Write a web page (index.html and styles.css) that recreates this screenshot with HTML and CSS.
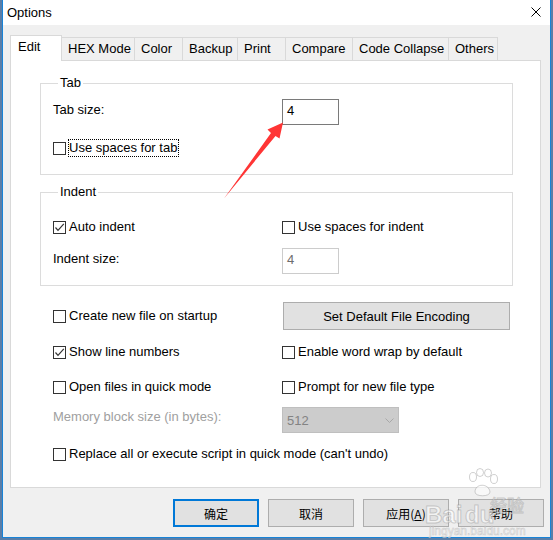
FILE: index.html
```html
<!DOCTYPE html>
<html>
<head>
<meta charset="utf-8">
<link rel="stylesheet" href="styles.css">
</head>
<body>
<div class="window">
  <div class="titlebar">
    <span class="title">Options</span>
    <svg class="close" width="10" height="10" viewBox="0 0 10 10"><path d="M0.5 0.5 L9.5 9.5 M9.5 0.5 L0.5 9.5" stroke="#000" stroke-width="1" fill="none"/></svg>
  </div>
  <div class="client">
    <div class="tabs">
      <div class="tab sel w-edit">Edit</div>
      <div class="tab w-hex">HEX Mode</div>
      <div class="tab w-color">Color</div>
      <div class="tab w-backup">Backup</div>
      <div class="tab w-print">Print</div>
      <div class="tab w-compare">Compare</div>
      <div class="tab w-code">Code Collapse</div>
      <div class="tab w-others">Others</div>
    </div>
    <div class="panel">
      <fieldset class="group g-tab">
        <legend>Tab</legend>
        <div class="row r-tabsize">
          <span class="lbl col1">Tab size:</span>
          <div class="edit">4</div>
        </div>
        <div class="row r-usetab">
          <div class="chk"><span class="box"></span><span class="txt focus">Use spaces for tab</span></div>
        </div>
      </fieldset>
      <fieldset class="group g-indent">
        <legend>Indent</legend>
        <div class="row r-auto">
          <div class="chk col1"><span class="box"><svg width="11" height="11" viewBox="0 0 11 11"><path d="M1.5 5.5 L4 8.3 L9.8 1.8" stroke="#333" stroke-width="1.2" fill="none"/></svg></span><span class="txt">Auto indent</span></div>
          <div class="chk"><span class="box"></span><span class="txt">Use spaces for indent</span></div>
        </div>
        <div class="row r-isize">
          <span class="lbl col1">Indent size:</span>
          <div class="edit disabled">4</div>
        </div>
      </fieldset>
      <div class="options">
        <div class="row r-a">
          <div class="chk col1"><span class="box"></span><span class="txt">Create new file on startup</span></div>
          <div class="btn enc">Set Default File Encoding</div>
        </div>
        <div class="row r-b">
          <div class="chk col1"><span class="box"><svg width="11" height="11" viewBox="0 0 11 11"><path d="M1.5 5.5 L4 8.3 L9.8 1.8" stroke="#333" stroke-width="1.2" fill="none"/></svg></span><span class="txt">Show line numbers</span></div>
          <div class="chk"><span class="box"></span><span class="txt">Enable word wrap by default</span></div>
        </div>
        <div class="row r-c">
          <div class="chk col1"><span class="box"></span><span class="txt">Open files in quick mode</span></div>
          <div class="chk"><span class="box"></span><span class="txt">Prompt for new file type</span></div>
        </div>
        <div class="row r-d">
          <span class="lbl col1 gray">Memory block size (in bytes):</span>
          <div class="select">
            <span>512</span>
            <svg width="9" height="5" viewBox="0 0 9 5"><path d="M0.5 0.5 L4.5 4.5 L8.5 0.5" stroke="#a8a8a8" stroke-width="1" fill="none"/></svg>
          </div>
        </div>
        <div class="row r-e">
          <div class="chk"><span class="box"></span><span class="txt">Replace all or execute script in quick mode (can't undo)</span></div>
        </div>
      </div>
    </div>
    <div class="buttons">
      <div class="btn dlg default">确定</div>
      <div class="btn dlg">取消</div>
      <div class="btn dlg">应用(<u>A</u>)</div>
      <div class="btn dlg">帮助</div>
    </div>
  </div>
  <svg class="arrow" width="553" height="540" viewBox="0 0 553 540">
    <polygon points="283,122.5 267.5,129.5 271,133 224,198.5 275.5,136 279.5,138.5" fill="#ff3535"/>
  </svg>
  <div class="watermark">
    <svg class="paw" width="34" height="30" viewBox="0 0 34 30">
      <g fill="rgba(255,255,255,0.55)" stroke="rgba(150,150,150,0.45)" stroke-width="1">
        <ellipse cx="8" cy="9" rx="3.5" ry="4.5"/>
        <ellipse cx="15" cy="4.5" rx="3.5" ry="4"/>
        <ellipse cx="23" cy="5" rx="3.5" ry="4"/>
        <ellipse cx="29" cy="11" rx="3.5" ry="4.5"/>
        <path d="M10 24 C10 15 24 15 25 24 C25 29 10 29 10 24 Z"/>
      </g>
    </svg>
    <span class="wm-bai">Bai</span><span class="wm-du">du</span><span class="wm-jy">经验</span>
    <span class="wm-url">jingyan.baidu.com</span>
  </div>
</div>
</body>
</html>
```

FILE: styles.css
```css
html, body {
  margin: 0;
  padding: 0;
}
body {
  width: 553px;
  height: 540px;
  background: #5a7ea8;
  overflow: hidden;
  font-family: "Liberation Sans", Arial, "Noto Sans CJK SC", sans-serif;
  font-size: 13px;
  color: #000;
}
.window {
  position: relative;
  margin-left: 2px;
  width: 549px;
  height: 538px;
  box-sizing: border-box;
  border: 1px solid #1883d7;
  border-top: none;
  background: #f0f0f0;
}
.titlebar {
  height: 25px;
  background: #fff;
  display: flex;
  align-items: center;
  justify-content: space-between;
  padding: 0 9px 0 4px;
}
.title {
  line-height: 25px;
}
.close {
  display: block;
  margin-top: -2px;
}
.client {
  padding: 10px 0 0 7px;
}
.tabs {
  display: flex;
  align-items: flex-end;
  height: 25px;
}
.tab {
  box-sizing: border-box;
  height: 23px;
  border: 1px solid #d9d9d9;
  border-bottom: none;
  margin-right: -1px;
  padding: 3px 0 0 6px;
  line-height: 16px;
  white-space: nowrap;
  background: #f0f0f0;
}
.tab.sel {
  height: 26px;
  margin-bottom: -1px;
  background: #fff;
  position: relative;
  z-index: 1;
  padding-left: 7px;
}
.w-edit { width: 52px; }
.w-hex { width: 74px; }
.w-color { width: 49px; }
.w-backup { width: 56px; }
.w-print { width: 49px; }
.w-compare { width: 68px; }
.w-code { width: 97px; }
.w-others { width: 50px; }

.panel {
  box-sizing: border-box;
  width: 531px;
  height: 428px;
  border: 1px solid #d9d9d9;
  background: #fff;
  padding-top: 14px;
}
.group {
  box-sizing: border-box;
  width: 473px;
  margin: 0 0 0 29px;
  padding: 0 0 0 12px;
  border: 1px solid #dcdcdc;
  min-width: 0;
}
.group legend {
  margin-left: 5px;
  padding: 0 2px;
  line-height: 16px;
}
.g-indent {
  margin-top: 9px;
}
.row {
  display: flex;
  align-items: flex-start;
}
.col1 {
  width: 229px;
  flex: none;
}
.lbl {
  line-height: 16px;
  padding-top: 3px;
}
.gray {
  color: #a0a0a0;
  padding-top: 2px;
}
.edit {
  box-sizing: border-box;
  width: 57px;
  height: 26px;
  border: 1px solid #7a7a7a;
  padding: 3px 0 0 4px;
  line-height: 16px;
}
.edit.disabled {
  border-color: #cccccc;
  color: #6d6d6d;
}
.chk {
  display: flex;
  align-items: center;
  height: 16px;
  line-height: 16px;
}
.box {
  box-sizing: border-box;
  width: 13px;
  height: 13px;
  border: 1px solid #333;
  background: #fff;
  flex: none;
  display: flex;
  align-items: center;
  justify-content: center;
}
.box svg {
  display: block;
}
.txt {
  margin-left: 3px;
  white-space: nowrap;
}
.focus {
  outline: 1px dotted #000;
  padding-right: 1px;
}
.r-tabsize { margin-top: 8px; }
.r-usetab { margin-top: 15px; margin-bottom: 18px; }
.r-auto { margin-top: 19px; }
.r-isize { margin-top: 13px; margin-bottom: 11px; }

.options {
  padding-left: 42px;
}
.r-a { margin-top: 16px; align-items: center; height: 28px; }
.r-b { margin-top: 14px; }
.r-c { margin-top: 19px; }
.r-d { margin-top: 12px; }
.r-e { margin-top: 13px; }

.btn {
  box-sizing: border-box;
  border: 1px solid #adadad;
  background: #e1e1e1;
  height: 28px;
  display: flex;
  align-items: center;
  justify-content: center;
  white-space: nowrap;
}
.enc {
  width: 227px;
  margin-left: 1px;
}
.select {
  box-sizing: border-box;
  width: 117px;
  height: 26px;
  border: 1px solid #bfbfbf;
  background: #cccccc;
  color: #838383;
  display: flex;
  align-items: center;
  justify-content: space-between;
  padding: 0 4px 0 4px;
}
.select svg {
  display: block;
  margin-top: 1px;
}
.buttons {
  display: flex;
  justify-content: flex-end;
  gap: 9px;
  margin-top: 11px;
  padding-right: 6px;
}
.dlg {
  width: 86px;
  font-family: "Noto Sans CJK SC", "Liberation Sans", sans-serif;
  font-size: 12px;
}
.dlg u {
  text-decoration: underline;
}
.default {
  border: 2px solid #0078d7;
}
.arrow {
  position: absolute;
  left: -3px;
  top: 0;
  pointer-events: none;
}
.watermark {
  position: absolute;
  left: 418px;
  top: 466px;
  width: 120px;
  height: 72px;
  pointer-events: none;
  color: rgba(255,255,255,0.6);
  -webkit-text-stroke: 1px rgba(140,140,140,0.4);
}
.paw {
  position: absolute;
  left: 44px;
  top: 2px;
}
.wm-bai, .wm-du {
  position: absolute;
  top: 36px;
  font-family: "Liberation Sans", Arial, sans-serif;
  font-weight: bold;
  font-size: 24px;
  line-height: 26px;
}
.wm-bai { left: 4px; }
.wm-du { left: 44px; }
.wm-jy {
  position: absolute;
  left: 69px;
  top: 28px;
  font-family: "Noto Sans CJK SC", sans-serif;
  font-size: 17px;
  line-height: 22px;
}
.wm-url {
  position: absolute;
  left: 8px;
  top: 58px;
  font-size: 12px;
  line-height: 14px;
  -webkit-text-stroke: 0.6px rgba(140,140,140,0.4);
}
```
